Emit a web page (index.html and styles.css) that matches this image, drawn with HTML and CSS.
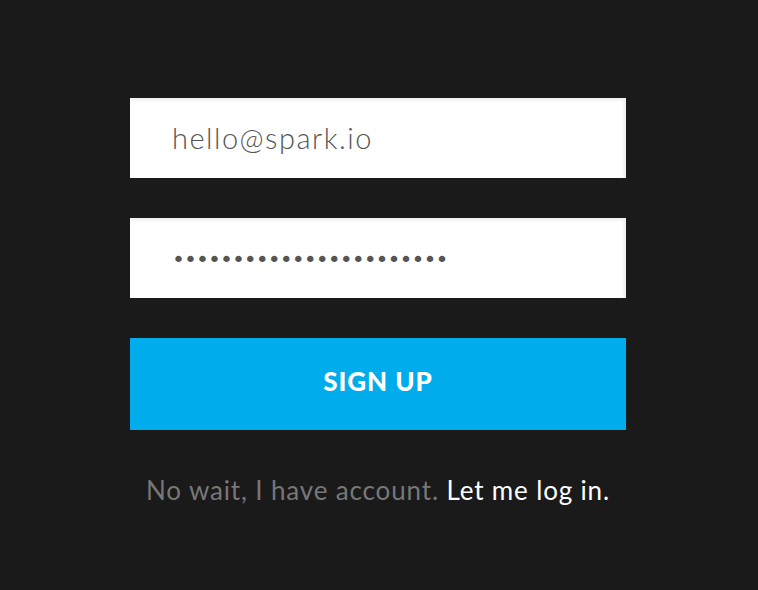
FILE: index.html
```html
<!DOCTYPE html>
<html>
<head>
<meta charset="utf-8">
<link rel="stylesheet" href="styles.css">
</head>
<body>
<form class="signup">
  <div class="field"><span class="value">hello@spark.io</span></div>
  <div class="field"><span class="dots">•••••••••••••••••••••••</span></div>
  <button type="button" class="btn">SIGN UP</button>
  <p class="alt">No wait, I have account. <a class="login">Let me log in.</a></p>
</form>
</body>
</html>
```

FILE: styles.css
```css
html, body {
  margin: 0;
  background: #1a1a1a;
}
body {
  font-family: Lato, "Open Sans", sans-serif;
  width: 758px;
  height: 590px;
  overflow: hidden;
}
.signup {
  width: 496px;
  margin: 98px 0 0 130px;
  display: flex;
  flex-direction: column;
  gap: 40px;
}
.field {
  height: 80px;
  background: #fff;
  box-shadow: inset -3px 3px 2px rgba(0,0,0,0.05);
  display: flex;
  align-items: center;
  padding-left: 42px;
  box-sizing: border-box;
}
.value {
  font-size: 29px;
  font-weight: 300;
  color: #555;
  letter-spacing: 1.5px;
  margin-top: -2px;
}
.dots {
  font-family: "DejaVu Sans", sans-serif;
  font-size: 22px;
  color: #555;
  letter-spacing: -1px;
  margin-top: 2px;
}
.btn {
  height: 92px;
  border: 0;
  background: #00acec;
  color: #fff;
  font-family: Lato, sans-serif;
  font-weight: 900;
  font-size: 26px;
  letter-spacing: 0.9px;
  padding: 0 0 6px;
  margin: 0;
}
.alt {
  margin: 0;
  padding-top: 4px;
  text-align: center;
  font-size: 26px;
  font-weight: 400;
  color: #777;
  letter-spacing: 0.85px;
}
.login {
  color: #fff;
}
```
